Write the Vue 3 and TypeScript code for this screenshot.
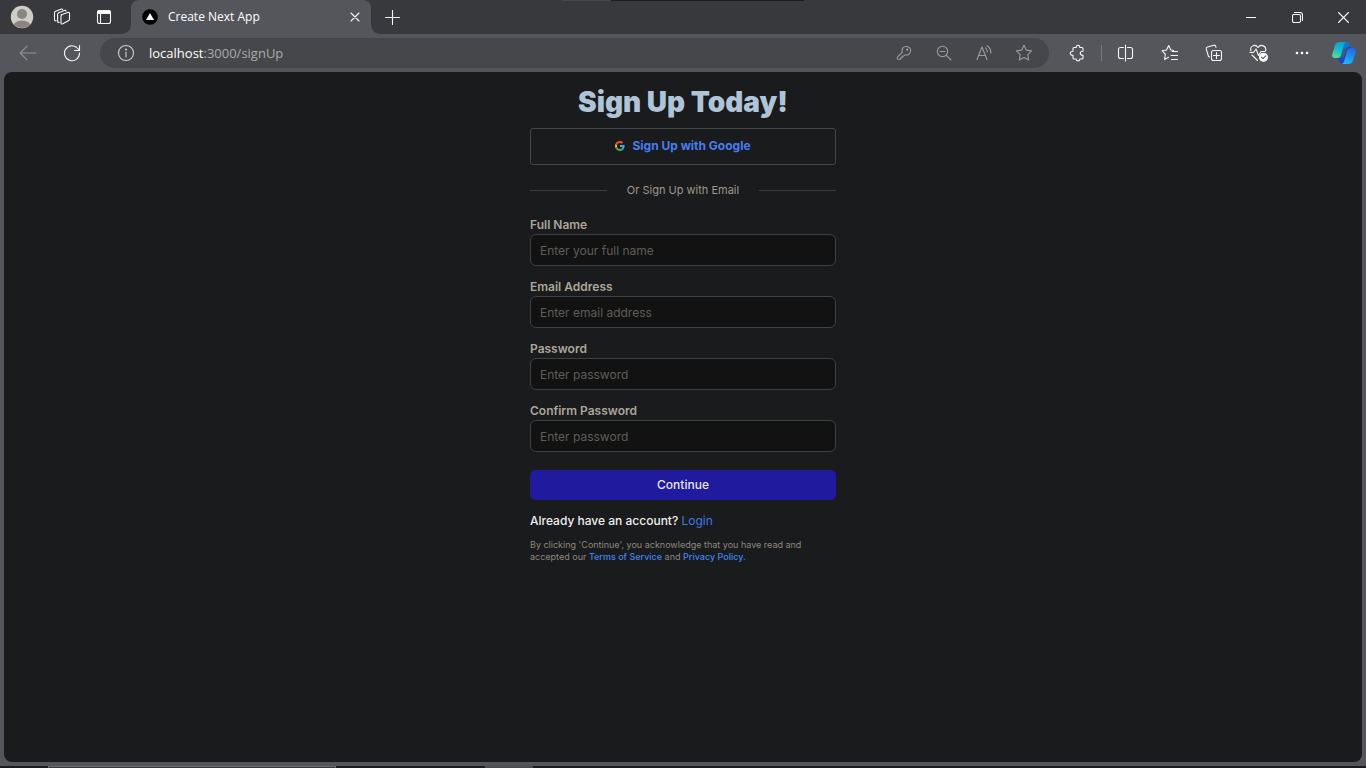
<script setup lang="ts">
import { reactive } from 'vue'

interface Field {
  id: string
  label: string
  placeholder: string
  type: string
}

const fields: Field[] = [
  { id: 'fullName', label: 'Full Name', placeholder: 'Enter your full name', type: 'text' },
  { id: 'email', label: 'Email Address', placeholder: 'Enter email address', type: 'email' },
  { id: 'password', label: 'Password', placeholder: 'Enter password', type: 'password' },
  { id: 'confirm', label: 'Confirm Password', placeholder: 'Enter password', type: 'password' },
]

const form = reactive<Record<string, string>>({ fullName: '', email: '', password: '', confirm: '' })
</script>

<template>
  <div class="window">
    <div class="edge"><span class="edge-light"></span><span class="edge-dark"></span></div>
    <header class="tabstrip">
      <button class="chrome-btn profile" aria-label="Profile">
        <svg width="24" height="24" viewBox="0 0 24 24">
          <defs><clipPath id="face"><circle cx="12" cy="12" r="11" /></clipPath></defs>
          <circle cx="12" cy="12" r="11.2" fill="#d0cdc9" />
          <circle cx="12" cy="9" r="5" fill="#8a8580" />
          <ellipse cx="12" cy="21" rx="8.5" ry="5.5" fill="#8a8580" clip-path="url(#face)" />
        </svg>
      </button>
      <button class="chrome-btn strip" aria-label="Workspaces">
        <svg class="line" width="18" height="18" viewBox="0 0 18 18">
          <path d="M8.2 6.7 14.6 4.5Q16.5 4 16.5 5.800V11Q16.500 12.300 15.300 12.800L9.800 15.800Q8 16.500 8 14.800V8.500Q8 7.200 9.200 6.500" />
          <path d="M6.300 14.300Q4.600 14.800 4.600 13V6.400Q4.600 5.200 5.800 4.700L11.300 2.500Q12.700 2 13.100 3" />
          <path d="M3.200 12.800Q1.500 13.200 1.500 11.400V4.900Q1.500 3.700 2.700 3.200L7.800 1.200Q9.300.700 9.700 1.700" />
        </svg>
      </button>
      <button class="chrome-btn strip" aria-label="Tab actions menu">
        <svg class="line" width="16" height="16" viewBox="0 0 16 16">
          <rect x="1.500" y="1.500" width="13" height="13" rx="2" />
          <path d="M1.500 3.500Q1.500 1.500 3.500 1.500H12.500Q14.500 1.500 14.500 3.500V4.500H1.500Z" fill="#fff" />
          <path d="M4.500 4.500V14.500" />
        </svg>
      </button>
      <div class="tab">
        <svg width="16" height="16" viewBox="0 0 16 16">
          <circle cx="8" cy="8" r="7.800" fill="#000" />
          <path d="M8 4 12 11H4Z" fill="#fff" />
        </svg>
        <span class="tab-title">Create Next App</span>
        <button class="chrome-btn tab-close" aria-label="Close tab">
          <svg class="line" width="10" height="10" viewBox="0 0 10 10"><path d="M1 1 9 9M9 1 1 9" /></svg>
        </button>
      </div>
      <button class="chrome-btn new-tab" aria-label="New tab">
        <svg class="line" width="15" height="15" viewBox="0 0 15 15"><path d="M7.500.500V14.500M.500 7.500H14.500" /></svg>
      </button>
      <div class="window-controls">
        <button class="chrome-btn" aria-label="Minimize">
          <svg class="line" width="10" height="11" viewBox="0 0 10 11"><path d="M0 5.500H10" /></svg>
        </button>
        <button class="chrome-btn" aria-label="Restore">
          <svg class="line" width="11" height="11" viewBox="0 0 11 11">
            <rect x=".500" y="2.500" width="8" height="8" rx="1.500" />
            <path d="M2.500.500H8Q10.500.500 10.500 3V8.500" />
          </svg>
        </button>
        <button class="chrome-btn" aria-label="Close">
          <svg class="line" width="11" height="11" viewBox="0 0 11 11"><path d="M.500.500 10.500 10.500M10.500.500.500 10.500" /></svg>
        </button>
      </div>
    </header>

    <nav class="toolbar">
      <button class="chrome-btn tool" aria-label="Back">
        <svg class="line faded" width="18" height="16" viewBox="0 0 18 16"><path d="M17 8H1.500M8 1.200 1.200 8 8 14.800" /></svg>
      </button>
      <button class="chrome-btn tool" aria-label="Refresh">
        <svg class="line" width="18" height="18" viewBox="0 0 18 18">
          <path d="M16.500 9A7.500 7.500 0 1 1 14.800 4.500L16 6" /><path d="M16.500 1.500V6.500H11.500" />
        </svg>
      </button>
      <div class="address">
        <button class="chrome-btn info" aria-label="View site information">
          <svg class="line pale" width="18" height="18" viewBox="0 0 18 18">
            <circle cx="9" cy="9" r="7.500" /><path d="M9 8V13" /><circle cx="9" cy="5.500" r=".5" />
          </svg>
        </button>
        <span class="url">localhost<span class="url-path">:3000/signUp</span></span>
        <button class="chrome-btn inner" aria-label="Save password">
          <svg class="line dim" width="16" height="16" viewBox="0 0 16 16">
            <path d="M6.200 7.500C5.300 4 7.300 1.500 10.200 1.500 12.800 1.500 14.500 3.300 14.500 5.800 14.500 8.700 12 10.600 9 9.800L7.600 11.200H6.200V12.800H4.600V14.300H2Q1.300 14.300 1.300 13.600V12.200Z" />
            <circle cx="11.200" cy="4.700" r=".6" />
          </svg>
        </button>
        <button class="chrome-btn inner" aria-label="Zoom">
          <svg class="line dim" width="16" height="16" viewBox="0 0 16 16">
            <circle cx="6.500" cy="6.500" r="5.200" /><path d="M10.300 10.300 15 15M4 6.500H9" />
          </svg>
        </button>
        <button class="chrome-btn inner" aria-label="Read aloud">
          <svg class="line dim" width="18" height="18" viewBox="0 0 18 18">
            <path d="M2 15.500 7 3 12 15.500M3.700 11.500H10.300" />
            <path d="M10.500 3.800Q12.300 5.300 12.300 7.800M12 1.800Q16.200 4.500 15.800 9" />
          </svg>
        </button>
        <button class="chrome-btn inner" aria-label="Add to favorites">
          <svg class="line dim" width="18" height="18" viewBox="0 0 18 18">
            <path d="M9 1.300 11.300 6.100 16.600 6.900 12.800 10.600 13.700 16 9 13.500 4.300 16 5.200 10.600 1.400 6.900 6.700 6.100Z" />
          </svg>
        </button>
      </div>
      <button class="chrome-btn tool" aria-label="Extensions">
        <svg class="line" width="18" height="18" viewBox="0 0 18 18">
          <path d="M5 4.500Q5 3.500 6 3.500H8.200Q8.200 1.300 10 1.300T11.800 3.500H14Q15 3.500 15 4.500V7.200Q12.200 7.200 12.200 9.200T15 11.200V14Q15 15 14 15H11.800Q11.800 17 10 17T8.200 15H6Q5 15 5 14V11.200Q2.300 11.200 2.300 9.200T5 7.200Z" />
        </svg>
      </button>
      <span class="separator"></span>
      <button class="chrome-btn tool" aria-label="Split screen">
        <svg class="line" width="18" height="18" viewBox="0 0 18 18">
          <path d="M6.500 3.500H3.500Q1.500 3.500 1.500 5.500V12.500Q1.500 14.500 3.500 14.500H6.500M10.500 3.500H13.500Q15.500 3.500 15.500 5.500V12.500Q15.500 14.500 13.500 14.500H10.500M8.500 1V17" />
        </svg>
      </button>
      <button class="chrome-btn tool" aria-label="Favorites">
        <svg class="line" width="18" height="18" viewBox="0 0 18 18">
          <path d="M12.500 6.500 9.800 6 7.700 1.500 5.500 6 1 6.700 4.300 10.200 3.600 15.500 7.500 13.300M11 7.500H16.500M10 11.500H16.500M10.500 15.500H16.500" />
        </svg>
      </button>
      <button class="chrome-btn tool" aria-label="Collections">
        <svg class="line" width="18" height="18" viewBox="0 0 18 18">
          <path d="M4.500 13 3.500 12.500 1.300 5.200Q.800 3.500 2.500 3L8.700 1.200Q10.300.900 10.800 2.500L11 3.300" />
          <rect x="6.500" y="6.500" width="10" height="10" rx="2" /><path d="M11.500 8.500V14.500M8.500 11.500H14.500" />
        </svg>
      </button>
      <button class="chrome-btn tool" aria-label="Browser essentials">
        <svg class="line" width="20" height="18" viewBox="0 0 20 18">
          <path d="M3 7C1.300 2 7-.500 10 3.500 13-.500 19 2 17.500 7M2 8.500H5.500L8 5 10.500 11.500 13 7.500H17M4 11 9.500 16.500" />
          <circle cx="15.500" cy="13.200" r="4" fill="#fff" />
          <path class="tick" d="M13.500 13.200 15 14.700 17.800 11.800" />
        </svg>
      </button>
      <button class="chrome-btn tool" aria-label="Settings and more">
        <svg width="14" height="4" viewBox="0 0 14 4" fill="#fff">
          <circle cx="2" cy="2" r="1.300" /><circle cx="7" cy="2" r="1.300" /><circle cx="12" cy="2" r="1.300" />
        </svg>
      </button>
      <button class="chrome-btn copilot" aria-label="Copilot">
        <svg width="24" height="22" viewBox="0 0 24 22">
          <defs>
            <linearGradient id="leafA" x1=".6" y1="0" x2=".3" y2="1">
              <stop offset="0" stop-color="#0a9fdd" /><stop offset=".5" stop-color="#16bdc9" /><stop offset="1" stop-color="#55dd92" />
            </linearGradient>
            <linearGradient id="leafB" x1=".7" y1="0" x2=".3" y2="1">
              <stop offset="0" stop-color="#2665e6" /><stop offset="1" stop-color="#18bdf5" />
            </linearGradient>
          </defs>
          <path d="M8 0H14.500Q16.500 0 17.300 3L18 6H14Q12 6 11 9L9 16H5Z" fill="#0878cc" />
          <path d="M6 16H10Q12 16 13 12L15 5H19L15 22H10Q8 22 7.300 19Z" fill="#1746d4" />
          <path d="M7.500 0H14.500Q12.500.300 11.500 4L9 13Q8 16 5 16H3Q-.500 16 .300 12L3 3.500Q4 0 7.500 0Z" fill="url(#leafA)" />
          <path d="M16.500 22H9.500Q11.500 21.700 12.500 18L15 9Q16 6 19 6H21Q24.500 6 23.700 10L21 18.500Q20 22 16.500 22Z" fill="url(#leafB)" />
        </svg>
      </button>
    </nav>

    <main class="page">
      <form class="signup" @submit.prevent>
        <h1>Sign Up Today!</h1>
        <button type="button" class="google">
          <svg width="10" height="10" viewBox="0 0 48 48">
            <path fill="#fbbc05" d="M9.800 24c0-1.500.300-3 .700-4.400L2.600 13.600A24 24 0 0 0 2.600 34.400l7.900-6A14 14 0 0 1 9.800 24Z" />
            <path fill="#f4511e" d="M23.700 10.100c3.300 0 6.300 1.200 8.700 3.100l6.800-6.800C35 2.800 29.700.500 23.700.500 14.400.500 6.400 5.800 2.600 13.600l7.900 6c1.800-5.500 7-9.500 13.200-9.500Z" />
            <path fill="#4caf50" d="M23.700 37.900c-6.200 0-11.400-4-13.200-9.500l-7.900 6c3.800 7.800 11.800 13.100 21.100 13.100 5.700 0 11.200-2 15.300-5.900l-7.500-5.800c-2.100 1.300-4.800 2.100-7.800 2.100Z" />
            <path fill="#42a5f5" d="M46.100 24c0-1.400-.200-2.900-.500-4.300H23.700v9.100h12.600c-.600 3.100-2.400 5.500-4.800 7l7.500 5.800c4.300-4 7.100-10 7.100-17.600Z" />
          </svg>
          <span>Sign Up with Google</span>
        </button>
        <div class="divider"><span>Or Sign Up with Email</span></div>
        <div v-for="field in fields" :key="field.id" class="field">
          <label :for="field.id">{{ field.label }}</label>
          <input :id="field.id" v-model="form[field.id]" :type="field.type" :placeholder="field.placeholder" autocomplete="off" />
        </div>
        <button type="submit" class="continue">Continue</button>
        <p class="login">Already have an account? <a href="#login">Login</a></p>
        <p class="terms">
          By clicking 'Continue', you acknowledge that you have read and accepted our
          <a href="#terms">Terms of Service</a> and <a href="#privacy">Privacy Policy.</a>
        </p>
      </form>
    </main>
    <div class="taskbar"><span class="task-search"></span><span class="task-app"></span></div>
  </div>
</template>

<style>
body {
  background: #55565b;
}
</style>

<style scoped>
* {
  box-sizing: border-box;
}
.window {
  position: relative;
  display: flex;
  flex-direction: column;
  min-height: 100vh;
  background: #55565b;
  font-family: "Open Sans", "Noto Sans", sans-serif;
}
.edge {
  position: absolute;
  top: 0;
  left: 563px;
  display: flex;
  height: 1px;
}
.edge-light {
  width: 48px;
  background: #4a4745;
}
.edge-dark {
  width: 193px;
  background: #1f1e1e;
}
.chrome-btn {
  display: flex;
  align-items: center;
  justify-content: center;
  flex: none;
  padding: 0;
  border: 0;
  background: none;
}
.line {
  fill: none;
  stroke: #f5f5f5;
  stroke-width: 1.1;
  stroke-linecap: round;
  stroke-linejoin: round;
}
.faded {
  stroke: #909195;
}
.pale {
  stroke: #cfcfd0;
}
.dim {
  stroke: #9b9b9c;
}
.tick {
  stroke: #55565b;
}
.tabstrip {
  display: flex;
  height: 34px;
  padding-left: 3px;
  background: #38393c;
}
.profile {
  width: 38px;
}
.strip {
  width: 42px;
}
.tab {
  position: relative;
  display: flex;
  align-items: center;
  width: 240px;
  margin-left: 6px;
  padding: 0 4px 0 11px;
  border-radius: 8px 8px 0 0;
  background: #55565b;
  color: #fff;
  font-size: 12px;
}
.tab::before,
.tab::after {
  content: "";
  position: absolute;
  bottom: 0;
  width: 8px;
  height: 8px;
}
.tab::before {
  right: 100%;
  background: radial-gradient(circle at 0 0, #38393c 7px, #55565b 8px);
}
.tab::after {
  left: 100%;
  background: radial-gradient(circle at 100% 0, #38393c 7px, #55565b 8px);
}
.tab-title {
  flex: 1;
  margin-left: 10px;
  line-height: 16px;
}
.tab-close {
  width: 24px;
  height: 24px;
}
.new-tab {
  width: 39px;
  margin-left: 2px;
}
.window-controls {
  display: flex;
  margin-left: auto;
}
.window-controls .chrome-btn {
  width: 46px;
}
.toolbar {
  display: flex;
  align-items: center;
  height: 38px;
  padding: 0 2px 0 6px;
}
.tool {
  width: 44px;
  height: 30px;
}
.copilot {
  width: 40px;
  height: 30px;
}
.address {
  display: flex;
  flex: 1;
  align-items: center;
  height: 30px;
  margin: 0 6px;
  padding: 0 5px 0 6px;
  border-radius: 15px;
  background: #46474a;
}
.info {
  width: 40px;
}
.inner {
  width: 40px;
}
.url {
  flex: 1;
  margin-left: 3px;
  color: #fff;
  font-size: 13px;
  line-height: 20px;
}
.url-path {
  color: #a9aaac;
}
.separator {
  width: 1px;
  height: 16px;
  margin: 0 2px;
  background: #77787c;
}
.page {
  flex: 1;
  margin: 0 4px 4px;
  border-radius: 8px;
  background: #191b1c;
  font-family: Inter, "Liberation Sans", sans-serif;
}
.signup {
  display: flex;
  flex-direction: column;
  width: 306px;
  margin: 0 auto;
  padding-top: 12px;
}
h1 {
  margin: 0 0 8px;
  color: #b0c4d8;
  font-size: 28px;
  font-weight: 900;
  line-height: 36px;
  text-align: center;
  white-space: nowrap;
}
.google {
  display: flex;
  align-items: center;
  justify-content: center;
  gap: 7px;
  height: 37px;
  padding: 0 0 2px;
  border: 1px solid #42474a;
  border-radius: 3px;
  background: none;
  color: #4a7df2;
  font: 700 12px/16px Inter, "Liberation Sans", sans-serif;
}
.divider {
  display: flex;
  align-items: center;
  justify-content: center;
  gap: 20px;
  margin: 17px 0 18px;
  color: #9f978b;
  font-size: 11px;
  line-height: 16px;
  white-space: nowrap;
}
.divider::before,
.divider::after {
  content: "";
  flex: 1;
  height: 1px;
  background: #383c3e;
}
.field {
  display: flex;
  flex-direction: column;
  margin-bottom: 12px;
}
.field label {
  color: #aca599;
  font-size: 12px;
  font-weight: 600;
  line-height: 18px;
}
.field input {
  width: 100%;
  height: 32px;
  padding: 0 9px;
  border: 1px solid #3c4144;
  border-radius: 6px;
  outline: 0;
  background: #121212;
  color: #e8e6e3;
  font: 400 12px/16px Inter, "Liberation Sans", sans-serif;
}
.field input::placeholder {
  color: #5f5d58;
  opacity: 1;
}
.continue {
  height: 30px;
  margin-top: 6px;
  padding: 0;
  border: 0;
  border-radius: 5px;
  background: #1f1a9e;
  color: #e8e6e3;
  font: 500 12px/16px Inter, "Liberation Sans", sans-serif;
}
.login {
  margin: 12px 0 10px;
  color: #f0efed;
  font-size: 12px;
  font-weight: 500;
  line-height: 17px;
}
.login a {
  color: #3f78e8;
  font-weight: 400;
  text-decoration: none;
}
.terms {
  margin: 0;
  padding-right: 20px;
  color: #8f887d;
  font-size: 9px;
  line-height: 12px;
}
.terms a {
  display: inline-block;
  color: #3f83f5;
  font-weight: 500;
  text-decoration: none;
}
.taskbar {
  display: flex;
  height: 2px;
  background: #1d1b1b;
}
.task-search {
  width: 288px;
  margin-left: 48px;
  border: 1px solid #6a6a6a;
  border-bottom: 0;
  background: #3a3a3a;
}
.task-app {
  width: 48px;
  margin-left: 149px;
  background: #4d4b4b;
}
</style>
